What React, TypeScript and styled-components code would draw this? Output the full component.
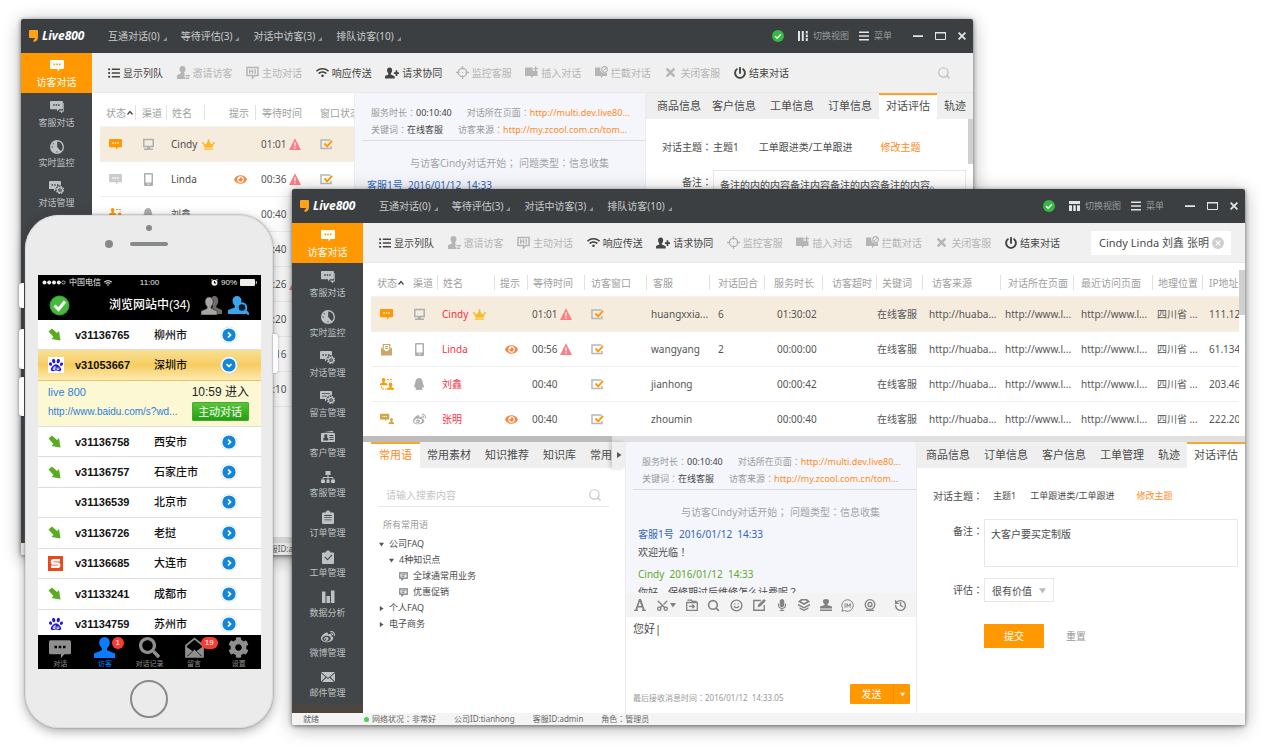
import React from "react";
import styled, { createGlobalStyle, css } from "styled-components";
import {
  FaListUl, FaWifi, FaTimes, FaPowerOff, FaQq, FaWeibo, FaCrown, FaEye,
  FaSearch, FaMicrophone, FaCog, FaPaw,
} from "react-icons/fa";
import { History, Scissors, Search, Smile } from "lucide-react";

const cjk = '"Noto Sans", "Noto Sans CJK SC", sans-serif';
const phoneFont = '"Liberation Sans", "Noto Sans CJK SC", sans-serif';
const orange = "#ff9801";

const Global = createGlobalStyle`
  *, *::before, *::after { box-sizing: border-box; }
  body { margin: 0; background: #fff; font-family: ${cjk}; font-size: 10px; line-height: 14px; color: #4c4c4c; }
  button, input, textarea, select { font: inherit; color: inherit; margin: 0; padding: 0; border: 0; background: none; outline: 0; border-radius: 0; }
  button { cursor: pointer; white-space: nowrap; }
  svg { display: block; flex: none; }
  ul { list-style: none; margin: 0; padding: 0; }
  a { color: inherit; text-decoration: none; }
`;

/* ---------- icons ---------- */

type GlyphProps = { w?: number; h?: number; box?: string; children: React.ReactNode };
const Glyph = ({ w = 14, h = 14, box, children }: GlyphProps) => (
  <svg width={w} height={h} viewBox={box ?? `0 0 ${w} ${h}`} fill="currentColor" aria-hidden="true">{children}</svg>
);

const bubble =
  "M1 1h12a1 1 0 0 1 1 1v7a1 1 0 0 1-1 1h-3.200L7.600 12.600V10H1a1 1 0 0 1-1-1V2a1 1 0 0 1 1-1zM3.500 4.600v1.600h1.600V4.600zM6.200 4.600v1.600h1.600V4.600zM8.900 4.600v1.600h1.600V4.600z";
const person = "M6 0a3 3 0 0 1 3 3c0 1.600-.7 2.600-1.500 3.400v1.200L12 9.400V12H0V9.400l4.500-1.800V6.400C3.700 5.600 3 4.600 3 3a3 3 0 0 1 3-3z";

const ChatIcon = ({ w = 13 }: { w?: number }) => <Glyph w={w} h={w} box="0 0 14 14"><path fillRule="evenodd" d={bubble} /></Glyph>;
const ChatsIcon = () => (
  <Glyph><path fillRule="evenodd" transform="scale(.92)" d={bubble} /><path d="M13.300 3h.7v8.500h-1.800v2l-2.200-2H8.800l.8-1h3.700z" /></Glyph>
);
const ClockIcon = () => (
  <Glyph><path fillRule="evenodd" d="M7 0a7 7 0 1 1 0 14A7 7 0 0 1 7 0zm.2 1.600V7l3.500 4.100A5.400 5.400 0 0 0 7.200 1.600zM1.500 6.500v1h1.500v-1zM6.500 11.200v1.400h1v-1.400zM3.200 3l-.6.7.9.9.6-.7z" /></Glyph>
);
const ChatGearIcon = ({ lines }: { lines?: boolean }) => (
  <Glyph w={15}>
    {lines
      ? <path fillRule="evenodd" d="M1 1h10a1 1 0 0 1 1 1v3.500A4.300 4.300 0 0 0 6.500 10L5 11.500V9H0V2a1 1 0 0 1 1-1zM2 3.200v.9h8v-.9zM2 5.700v.9h5v-.9z" />
      : <path fillRule="evenodd" d="M1 1h10a1 1 0 0 1 1 1v3.500A4.300 4.300 0 0 0 6.500 10L5 11.500V9H0V2a1 1 0 0 1 1-1zM2.500 4.200v1.500H4V4.200zM5.200 4.200v1.500h1.500V4.200zM8 4.200v1.500h1.500V4.200z" />}
    <circle cx="11" cy="10" r="2.500" fill="none" stroke="currentColor" strokeWidth="1.300" />
    <circle cx="11" cy="10" r="3.700" fill="none" stroke="currentColor" strokeWidth="1.100" strokeDasharray="1.450 1.450" />
    <circle cx="11" cy="10" r=".7" />
  </Glyph>
);
const CardIcon = () => (
  <Glyph><path d="M2 2.200 12 .8l.4 1.400z" /><path fillRule="evenodd" d="M1 3h12a1 1 0 0 1 1 1v7a1 1 0 0 1-1 1H1a1 1 0 0 1-1-1V4a1 1 0 0 1 1-1zm3.800 1.200a1.700 1.700 0 0 0-1 3l-1.500 1v2.300h5V8.200l-1.500-1a1.700 1.700 0 0 0-1-3zM8.500 5v1h4V5zm0 2v1h4V7zm0 2v1h4V9z" /></Glyph>
);
const OrgIcon = () => (
  <Glyph><path d="M4.500 1h5v4h-5zM0 9.500h4V13H0zM10 9.500h4V13h-4zM5.500 9.500h3V13h-3z" /><path d="M7 5v4.500M2 9.500v-2h10v2" fill="none" stroke="currentColor" /></Glyph>
);
const ClipIcon = ({ check }: { check?: boolean }) => (
  <Glyph>
    <path fillRule="evenodd" d={check
      ? "M2 2.500h2.500L6 .6h2l1.500 1.900H12a1 1 0 0 1 1 1V13a1 1 0 0 1-1 1H2a1 1 0 0 1-1-1V3.500a1 1 0 0 1 1-1zM3.500 7.200l3 3.400 5-5.400-.8-.7-4.200 4.500-2.200-2.500z"
      : "M2 2.500h2.500L6 .6h2l1.500 1.900H12a1 1 0 0 1 1 1V13a1 1 0 0 1-1 1H2a1 1 0 0 1-1-1V3.500a1 1 0 0 1 1-1zM3.200 5v.9h7.600V5zm0 2.200v.9h7.600v-.9zm0 2.200v.9h7.600v-.9z"} />
  </Glyph>
);
const BarsIcon = () => <Glyph><path d="M1 1.500h3.500V13H1zM5.500 6H9v7H5.500zM10 .500h3.500V13H10z" /></Glyph>;
const MailIcon = () => (
  <Glyph><path d="M0 2h14L7 8zM0 3.200 4.600 7 0 11.600zM14 3.200 9.400 7l4.600 4.600zM5.400 7.700 7 9l1.600-1.300 4.600 4.300H.8z" /></Glyph>
);
const InviteIcon = () => (
  <Glyph w={13} h={13}><path d="M5.500 0a3 3 0 0 1 3 3c0 1.500-.6 2.500-1.400 3.300v1l2 .9H7.500v3.300H8V13H0V9.600l3.900-2.300v-1C3.100 5.500 2.500 4.500 2.500 3a3 3 0 0 1 3-3zM8.500 9h4.500v1.300H8.500zM11 8.500l2 1.200-2 1.300zM8.500 11.500H12V13H8.500z" /></Glyph>
);
const UserPlusIcon = () => (
  <Glyph w={14} h={12}><path d={person} transform="translate(-.5 .5) scale(.85 .92)" /><path d="M10.600 3.200h1.700v2H14v1.700h-1.700v2h-1.700v-2H8.900V5.200h1.700z" /></Glyph>
);
const HiIcon = () => (
  <Glyph w={13} h={13}><path fill="none" stroke="currentColor" strokeWidth="1.500" d="M1 1.500h11v8H8.500l-2 2.500V9.500H1z" /><path d="M3 3.200h1.300v1.600h1.600V3.200h1.300v4.600H5.900V6H4.300v1.800H3zM8.500 3.200h1.500v4.600H8.500z" /></Glyph>
);
const TargetIcon = () => (
  <Glyph w={13} h={13}><circle cx="6.500" cy="6.500" r="4.200" fill="none" stroke="currentColor" strokeWidth="1.300" /><path d="M5.800 0h1.400v3.500H5.800zM5.800 9.500h1.400V13H5.800zM0 5.800h3.500v1.400H0zM9.500 5.800H13v1.400H9.500zM6 6h1v1H6z" /></Glyph>
);
const InsertIcon = () => (
  <Glyph w={13} h={13}><path d="M0 1.500h7.500v3.300h5V10H8.200L6 12.300V10H0z" /><path d="M10 .200h1.200V2H13v1.200h-1.800V5H10V3.200H8.300V2H10z" /></Glyph>
);
const BlockIcon = () => (
  <Glyph w={13} h={13}><path d="M0 1.500h5.500a4.300 4.300 0 0 0 6.500 5V10H8L6 12.300V10H0z" /><circle cx="9.500" cy="3.500" r="2.800" fill="none" stroke="currentColor" strokeWidth="1.200" /><path d="m7.700 5.500 3.800-4" stroke="currentColor" /></Glyph>
);
const MonitorIcon = () => (
  <Glyph w={13} h={13}><path fill="none" stroke="currentColor" strokeWidth="1.500" d="M1.800 1.500h9.400v7H1.800z" /><path d="M5 9h3v1.500H5zM2 10.500h9V12H2z" /></Glyph>
);
const MobileIcon = () => (
  <Glyph w={13} h={13}><path fillRule="evenodd" d="M3 0h7a1 1 0 0 1 1 1v11a1 1 0 0 1-1 1H3a1 1 0 0 1-1-1V1a1 1 0 0 1 1-1zm.5 1.500v8h6v-8zM5.800 10.500v1.300h1.400v-1.300z" /></Glyph>
);
const WarnIcon = () => (
  <Glyph w={12} h={12}><path fill="#fa7f86" d="M6 .3 12 12H0z" /><path fill="#fff" d="M5.400 4.300h1.200v4H5.400zM5.400 9.300h1.200v1.200H5.400z" /></Glyph>
);
const WindowIcon = () => (
  <Glyph w={13} h={12}><path fill="none" stroke="#b4b8ba" strokeWidth="1.500" d="M10.500 2H1v8.500h10V8" /><path fill="none" stroke={orange} strokeWidth="1.900" d="m4.500 5.500 2.700 2.800L12 2.800" /></Glyph>
);
const LetterIcon = () => (
  <Glyph w={13} h={13}><path fill="none" stroke="#cfa669" strokeWidth="1.200" d="M3.200 6.500v-5h6.600v5M5 3.500h3M5 5.300h3" /><path fill="#cfa669" d="M1 4.500 6.500 8.500l5.500-4V12.500H1z" /></Glyph>
);
const TransferIcon = () => (
  <Glyph w={14} h={12}><path d={person} transform="scale(.6)" /><path d={person} transform="translate(7 4.600) scale(.6)" /><path fill="none" stroke="currentColor" strokeDasharray="2 1" d="M7 1.500h4.500v2M1.500 8.500v2.500h5" /></Glyph>
);
const AssistIcon = () => (
  <Glyph w={14} h={12}><path fillRule="evenodd" d={bubble} transform="scale(.66)" /><path d={person} transform="translate(8.500 5) scale(.5)" /></Glyph>
);
const CommentIcon = () => (
  <Glyph w={9} h={9}><path fill="none" stroke="#777" strokeWidth="1.200" d="M.8.900h7.400v5.300H4.500L3 7.800V6.200H.8z" /><path stroke="#777" d="M2.500 2.800h4M2.500 4.300h3" /></Glyph>
);
const OkBadge = ({ size = 12 }: { size?: number }) => (
  <Glyph w={size} h={size} box="0 0 12 12"><circle cx="6" cy="6" r="6" fill="#35b845" /><path fill="none" stroke="#fff" strokeWidth="1.300" d="m3.200 6.200 2 2 3.700-4" /></Glyph>
);
const ColumnsIcon = () => <Glyph w={10} h={10}><path d="M0 0h2v10H0zM3.800 0h2v10h-2zM7.800 0h2v2.600h-2zM7.800 3.600h2v2.600h-2zM7.800 7.200h2V10h-2z" /></Glyph>;
const RowsIcon = () => <Glyph w={11} h={10}><path d="M0 0h11v3H0zM0 4.200h3V10H0zM4.200 4.200h2.600V10H4.200zM8 4.200h3V10H8z" /></Glyph>;
const MenuIcon = () => <Glyph w={10} h={10}><path d="M0 .5h10V2H0zM0 4.200h10v1.500H0zM0 8h10v1.500H0z" /></Glyph>;
const Corner = () => <Glyph w={4} h={4}><path fill="#8e9192" d="M4 0v4H0z" /></Glyph>;
const Triangle = ({ dir, color = "#555", size = 5 }: { dir: "down" | "right"; color?: string; size?: number }) => (
  <Glyph w={size} h={size} box="0 0 6 6"><path fill={color} d={dir === "down" ? "M0 1h6L3 5.500z" : "M1 0l4.500 3L1 6z"} /></Glyph>
);

/* ---------- window frame ---------- */

const Desktop = styled.main`
  position: relative;
  min-width: 1200px;
  min-height: 100vh;
  overflow: hidden;
`;

const Frame = styled.section<{ $top: number; $left: number; $right: number }>`
  position: absolute;
  top: ${(p) => p.$top}px;
  left: ${(p) => p.$left}px;
  right: ${(p) => p.$right}px;
  border-radius: 2px;
  background: #fff;
  box-shadow: 0 1px 4px rgba(0, 0, 0, 0.5), 0 3px 18px rgba(0, 0, 0, 0.32);
`;
const Clip = styled.div`
  border-radius: 2px;
  overflow: hidden;
`;

const TitleBar = styled.header`
  display: flex;
  align-items: center;
  height: 34px;
  padding: 0 7px 0 8px;
  background: #3c3f41;
  color: #c9cbcc;
`;
const Logo = styled.a`
  display: flex;
  align-items: center;
  gap: 4px;
  width: 79px;
  color: #fff;
  font-size: 12px;
  font-weight: 700;
  font-style: italic;
`;
const Menus = styled.nav`
  display: flex;
  gap: 14px;
  flex: 1;
`;
const MenuButton = styled.button`
  display: flex;
  align-items: center;
  gap: 3px;
  svg { margin-top: 5px; }
`;
const TitleTools = styled.div`
  display: flex;
  align-items: center;
  font-size: 9px;
  color: #9a9c9d;
`;
const TitleTool = styled.button<{ $after: number }>`
  display: flex;
  align-items: center;
  gap: 5px;
  margin-right: ${(p) => p.$after}px;
  svg { color: #e4e4e4; }
`;

const Body = styled.div`
  display: grid;
  grid-template-columns: 71px minmax(0, 1fr);
`;
const Sidebar = styled.nav`
  padding-bottom: 2px;
  background: #424649;
  border-bottom: 8px solid #4c4540;
`;
const SideItem = styled.a<{ $active?: boolean }>`
  display: flex;
  flex-direction: column;
  align-items: center;
  gap: 2px;
  height: 40px;
  padding-top: 7px;
  font-size: 9px;
  color: #bfc1c2;
  ${(p) => p.$active && css`
    padding-top: 6px;
    background: ${orange};
    color: #fff;
    font-size: 10px;
  `}
`;
const Main = styled.div`
  display: flex;
  flex-direction: column;
`;
const Toolbar = styled.div`
  display: flex;
  align-items: center;
  justify-content: space-between;
  height: 40px;
  padding: 0 14px 0 16px;
  background: #f0f0f0;
  border-bottom: 1px solid #e8e8e8;
`;
const Tools = styled.div`
  display: flex;
  justify-content: space-between;
  width: 681px;
`;
const Tool = styled.button<{ $off?: boolean }>`
  display: flex;
  align-items: center;
  gap: 3px;
  color: ${(p) => (p.$off ? "#b5b5b5" : "#444")};
`;
const SearchBox = styled.label`
  display: flex;
  align-items: center;
  width: 140px;
  height: 24px;
  padding: 0 7px 0 8px;
  background: #fff;
  font-size: 11px;
  input { flex: 1; min-width: 0; }
`;
const IconButton = styled.button<{ $color?: string }>`
  display: flex;
  align-items: center;
  color: ${(p) => p.$color ?? "#bbb"};
`;
const SearchIconButton = styled(IconButton)`
  margin-right: 8px;
`;
const StatusBar = styled.footer`
  display: flex;
  align-items: center;
  gap: 18px;
  height: 12px;
  padding-left: 11px;
  background: #f4f4f4;
  font-size: 8px;
  line-height: 12px;
  color: #666;
`;
const StatusReady = styled.span`
  width: 43px;
`;
const StatusNet = styled.div`
  display: flex;
  align-items: center;
  gap: 3px;
  &::before { content: ""; width: 5px; height: 5px; border-radius: 50%; background: #4ccf50; }
`;
const Mark = styled.span`
  font-family: "Noto Sans CJK TC", sans-serif;
`;

const menus = ["互通对话(0)", "等待评估(3)", "对话中访客(3)", "排队访客(10)"];
const sideItems: [string, React.ReactNode][] = [
  ["访客对话", <ChatIcon w={14} />],
  ["客服对话", <ChatsIcon />],
  ["实时监控", <ClockIcon />],
  ["对话管理", <ChatGearIcon />],
  ["留言管理", <ChatGearIcon lines />],
  ["客户管理", <CardIcon />],
  ["客服管理", <OrgIcon />],
  ["订单管理", <ClipIcon />],
  ["工单管理", <ClipIcon check />],
  ["数据分析", <BarsIcon />],
  ["微博管理", <FaWeibo size={14} />],
  ["邮件管理", <MailIcon />],
];
const tools: [string, React.ReactNode, boolean][] = [
  ["显示列队", <FaListUl size={12} />, false],
  ["邀请访客", <InviteIcon />, true],
  ["主动对话", <HiIcon />, true],
  ["响应传送", <FaWifi size={13} />, false],
  ["请求协同", <UserPlusIcon />, false],
  ["监控客服", <TargetIcon />, true],
  ["插入对话", <InsertIcon />, true],
  ["拦截对话", <BlockIcon />, true],
  ["关闭客服", <FaTimes size={13} />, true],
  ["结束对话", <FaPowerOff size={12} />, false],
];

type WindowProps = {
  top: number; left: number; right: number;
  viewIcon: React.ReactNode; search: React.ReactNode; children: React.ReactNode;
};
const AppWindow = ({ top, left, right, viewIcon, search, children }: WindowProps) => (
  <Frame $top={top} $left={left} $right={right}>
    <Clip>
      <TitleBar>
        <Logo href="#">
          <Glyph w={9} h={12}><path fill="#ffa21a" d="M1 0h7a1 1 0 0 1 1 1v6c0 3-1.500 4.500-4.500 5V9.800C5.600 9.400 6 8.800 6 8H1a1 1 0 0 1-1-1V1a1 1 0 0 1 1-1z" /></Glyph>
          Live800
        </Logo>
        <Menus>{menus.map((m) => <MenuButton key={m}>{m}<Corner /></MenuButton>)}</Menus>
        <TitleTools>
          <TitleTool $after={14} aria-label="在线"><OkBadge /></TitleTool>
          <TitleTool $after={10}>{viewIcon}切换视图</TitleTool>
          <TitleTool $after={21}><MenuIcon />菜单</TitleTool>
          <TitleTool $after={12} aria-label="最小化"><Glyph w={10} h={10}><path d="M0 4.300h10v1.600H0z" /></Glyph></TitleTool>
          <TitleTool $after={12} aria-label="最大化"><Glyph w={11} h={8}><path fill="none" stroke="currentColor" d="M.5.500h10v7H.5z" /><path d="M0 0h11v1.500H0z" /></Glyph></TitleTool>
          <TitleTool $after={0} aria-label="关闭"><Glyph w={8} h={8}><path fill="none" stroke="currentColor" strokeWidth="1.800" d="m.6.600 6.800 6.800M7.400.600.6 7.400" /></Glyph></TitleTool>
        </TitleTools>
      </TitleBar>
      <Body>
        <Sidebar>
          {sideItems.map(([label, icon], i) => <SideItem href="#" key={label} $active={i === 0}>{icon}{label}</SideItem>)}
        </Sidebar>
        <Main>
          <Toolbar>
            <Tools>{tools.map(([label, icon, off]) => <Tool key={label} $off={off}>{icon}{label}</Tool>)}</Tools>
            {search}
          </Toolbar>
          {children}
        </Main>
      </Body>
      <StatusBar>
        <StatusReady>就绪</StatusReady>
        <StatusNet><span>网络状况<Mark>：</Mark>非常好</span></StatusNet>
        <span>公司ID:tianhong</span>
        <span>客服ID:admin</span>
        <span>角色<Mark>：</Mark>管理员</span>
      </StatusBar>
    </Clip>
  </Frame>
);

/* ---------- visitor table ---------- */

const VisitorTable = styled.table`
  width: 100%;
  table-layout: fixed;
  border-collapse: separate;
  border-spacing: 0;
  white-space: nowrap;
`;
const HeadCell = styled.th`
  height: 34px;
  padding: 6px 0 0;
  font-weight: 400;
  text-align: left;
  color: #a0a0a0;
  border-bottom: 1px solid #f3f1ee;
`;
const HeadText = styled.div<{ $pad: number; $rule?: boolean }>`
  display: flex;
  align-items: center;
  gap: 1px;
  height: 15px;
  padding-left: ${(p) => p.$pad}px;
  border-left: ${(p) => (p.$rule ? "1px solid #e2e2e2" : "0")};
`;
const VisitorRow = styled.tr<{ $active?: boolean }>`
  background: ${(p) => (p.$active ? "#f6ecde" : "transparent")};
`;
const Cell = styled.td<{ $pad: number; $color?: string }>`
  height: 35px;
  padding: 0 0 0 ${(p) => p.$pad}px;
  border-bottom: 1px solid #f0f0f0;
  color: ${(p) => p.$color ?? "#555"};
`;
const CellLine = styled.div<{ $gap?: number }>`
  display: flex;
  align-items: center;
  gap: ${(p) => p.$gap ?? 2}px;
`;
const Tint = styled.span<{ $color: string }>`
  display: inline-flex;
  color: ${(p) => p.$color};
`;

const statusIcon = (kind: string) => {
  switch (kind) {
    case "chat": return <Tint $color={orange}><ChatIcon /></Tint>;
    case "idle": return <Tint $color="#ccc"><ChatIcon /></Tint>;
    case "letter": return <LetterIcon />;
    case "transfer": return <Tint $color={orange}><TransferIcon /></Tint>;
    default: return <Tint $color="#d5a545"><AssistIcon /></Tint>;
  }
};
const channelIcon = (kind: string) => (
  <Tint $color="#abafb1">
    {kind === "pc" ? <MonitorIcon /> : kind === "mobile" ? <MobileIcon /> : kind === "qq" ? <FaQq size={12} /> : <FaWeibo size={13} />}
  </Tint>
);

type Visitor = {
  status: string; channel: string; name?: string; vip?: boolean; seen?: boolean; wait: string; warn?: boolean; extra?: string[];
};
type Column = { label: string; w?: number; head: number; body: number; rule?: boolean };

const VisitorGrid = ({ columns, rows, nameColor }: { columns: Column[]; rows: Visitor[]; nameColor: string }) => (
  <VisitorTable>
    <colgroup>{columns.map((c) => <col key={c.label} width={c.w} />)}</colgroup>
    <thead>
      <tr>
        {columns.map((c, i) => (
          <HeadCell key={c.label}>
            <HeadText $pad={c.head} $rule={c.rule}>
              {c.label}
              {i === 0 && <Glyph w={6} h={6}><path fill="none" stroke="#444" strokeWidth="1.200" d="m.5 4.500 2.500-3 2.500 3" /></Glyph>}
            </HeadText>
          </HeadCell>
        ))}
      </tr>
    </thead>
    <tbody>
      {rows.map((r, i) => (
        <VisitorRow key={i} $active={i === 0}>
          <Cell $pad={columns[0].body}><CellLine>{statusIcon(r.status)}</CellLine></Cell>
          <Cell $pad={columns[1].body}><CellLine>{channelIcon(r.channel)}</CellLine></Cell>
          <Cell $pad={columns[2].body} $color={nameColor}>
            <CellLine $gap={5}>{r.name}{r.vip && <Tint $color="#fbb92a"><FaCrown size={13} /></Tint>}</CellLine>
          </Cell>
          <Cell $pad={columns[3].body}><CellLine>{r.seen && <Tint $color="#f58742"><FaEye size={13} /></Tint>}</CellLine></Cell>
          <Cell $pad={columns[4].body}><CellLine>{r.wait}{r.warn && <WarnIcon />}</CellLine></Cell>
          <Cell $pad={columns[5].body}><CellLine><WindowIcon /></CellLine></Cell>
          {r.extra?.map((t, n) => <Cell key={n} $pad={columns[6 + n].body}>{t}</Cell>)}
        </VisitorRow>
      ))}
    </tbody>
  </VisitorTable>
);

const wideColumns: Column[] = [
  { label: "状态", w: 36, head: 6, body: 9 },
  { label: "渠道", w: 30, head: 6, body: 6 },
  { label: "姓名", w: 57, head: 5, body: 5, rule: true },
  { label: "提示", w: 33, head: 5, body: 11, rule: true },
  { label: "等待时间", w: 57, head: 5, body: 5, rule: true },
  { label: "访客窗口", w: 62, head: 6, body: 7, rule: true },
  { label: "客服", w: 63, head: 6, body: 5, rule: true },
  { label: "对话回合", w: 55, head: 8, body: 9, rule: true },
  { label: "服务时长", w: 58, head: 9, body: 13, rule: true },
  { label: "访客超时", w: 54, head: 9, body: 9, rule: true },
  { label: "关键词", w: 46, head: 5, body: 1, rule: true },
  { label: "访客来源", w: 78, head: 9, body: 7, rule: true },
  { label: "对话所在页面", w: 73, head: 7, body: 5, rule: true },
  { label: "最近访问页面", w: 79, head: 7, body: 8, rule: true },
  { label: "地理位置", w: 50, head: 5, body: 5, rule: true },
  { label: "IP地址", head: 6, body: 7, rule: true },
];
const more = (agent: string, turns: string, time: string, ip: string) => [
  agent, turns, time, "", "在线客服", "http://huaba...", "http://www.l...", "http://www.l...", "四川省 ...", ip,
];
const wideRows: Visitor[] = [
  { status: "chat", channel: "pc", name: "Cindy", vip: true, wait: "01:01", warn: true, extra: more("huangxxia...", "6", "01:30:02", "111.12") },
  { status: "letter", channel: "mobile", name: "Linda", seen: true, wait: "00:56", warn: true, extra: more("wangyang", "2", "00:00:00", "61.134") },
  { status: "transfer", channel: "qq", name: "刘鑫", wait: "00:40", extra: more("jianhong", "", "00:00:42", "203.46") },
  { status: "assist", channel: "weibo", name: "张明", seen: true, wait: "00:40", extra: more("zhoumin", "", "00:00:40", "222.20") },
];
const narrowColumns: Column[] = [
  { label: "状态", w: 35, head: 6, body: 9 },
  { label: "渠道", w: 31, head: 6, body: 7, rule: true },
  { label: "姓名", w: 38, head: 5, body: 5, rule: true },
  { label: "提示", w: 51, head: 24, body: 30, rule: true },
  { label: "等待时间", w: 59, head: 6, body: 6, rule: true },
  { label: "窗口状态", head: 6, body: 6 },
];
const narrowRows: Visitor[] = [
  { status: "chat", channel: "pc", name: "Cindy", vip: true, wait: "01:01", warn: true },
  { status: "idle", channel: "mobile", name: "Linda", seen: true, wait: "00:36", warn: true },
  { status: "transfer", channel: "qq", name: "刘鑫", wait: "00:40" },
  { status: "idle", channel: "pc", wait: "00:40" },
  { status: "idle", channel: "pc", wait: "00:26", warn: true },
  { status: "idle", channel: "mobile", wait: "00:20" },
  { status: "idle", channel: "qq", wait: "00:16" },
  { status: "idle", channel: "pc", wait: "00:10" },
];

const ListPane = styled.div`
  display: flex;
  flex-direction: column;
  justify-content: space-between;
  padding-left: 8px;
  overflow: hidden;
`;
const TablePane = styled.div`
  display: grid;
  grid-template-columns: minmax(0, 1fr) 6px;
  height: 173px;
  padding-left: 8px;
  overflow: hidden;
`;
const TableClip = styled.div`
  overflow: hidden;
`;
const VThumb = styled.div<{ $gap?: number }>`
  height: 45px;
  margin-top: ${(p) => p.$gap ?? 0}px;
  background: #d0d0d0;
`;
const HScroll = styled.div`
  height: 6px;
  background: #e0e0e0;
`;
const HThumb = styled.div`
  width: 249px;
  height: 6px;
  background: #bcbcbc;
`;
const Panes = styled.div`
  display: grid;
  grid-template-columns: 262px 292px minmax(0, 1fr);
  flex: 1;
`;

/* ---------- tabs ---------- */

const TabBar = styled.div<{ $start?: number }>`
  display: flex;
  height: 26px;
  padding-left: ${(p) => p.$start ?? 0}px;
  background: #efefef;
  overflow: hidden;
`;
const Tab = styled.button<{ $active?: boolean; $accent?: boolean; $tight?: boolean }>`
  flex: none;
  height: 26px;
  padding: 0 ${(p) => (p.$tight ? 4 : p.$accent ? 8 : 7)}px;
  font-size: 11px;
  color: ${(p) => (p.$accent ? "#ff8a1c" : "#4c4c4c")};
  ${(p) => p.$active && css`
    background: #fff;
    box-shadow: inset 0 2px 0 #ffa42a;
  `}
`;

/* ---------- conversation ---------- */

const Conversation = styled.div`
  display: flex;
  flex-direction: column;
  border-left: 1px solid #ececef;
  border-right: 1px solid #ececef;
`;
const Log = styled.div`
  height: 151px;
  padding: 11px 0 0 7px;
  background: #f5f6fb;
  overflow: hidden;
  white-space: nowrap;
`;
const Facts = styled.div`
  padding: 0 0 2px 9px;
  border-bottom: 1px solid #dadce2;
  font-size: 9px;
  line-height: 17px;
  color: #999;
`;
const Fact = styled.span`
  margin-right: 15px;
  b { font-weight: 400; color: #444; }
  a { color: #ff8a1c; }
`;
const Notice = styled.p`
  margin: 15px 0 7px 12px;
  text-align: center;
  color: #a3a3a3;
`;
const Message = styled.div<{ $color: string }>`
  padding-left: 5px;
  margin-bottom: 6px;
  line-height: 16px;
  color: ${(p) => p.$color};
  white-space: pre;
  p { margin: 2px 0 0; color: #4c4c4c; }
`;

const ChatLog = () => (
  <Log>
    <Facts>
      <div>
        <Fact>服务时长<Mark>：</Mark><b>00:10:40</b></Fact>
        <Fact>对话所在页面<Mark>：</Mark><a href="#">http://multi.dev.live80...</a></Fact>
      </div>
      <div>
        <Fact>关键词<Mark>：</Mark><b>在线客服</b></Fact>
        <Fact>访客来源<Mark>：</Mark><a href="#">http://my.zcool.com.cn/tom...</a></Fact>
      </div>
    </Facts>
    <Notice>与访客Cindy对话开始<Mark>；</Mark> 问题类型<Mark>：</Mark>信息收集</Notice>
    <Message $color="#2f66bd">{"客服1号  2016/01/12  14:33"}<p>欢迎光临<Mark>！</Mark></p></Message>
    <Message $color="#62a82b">{"Cindy  2016/01/12  14:33"}<p>你好，保修期过后维修怎么计费呢<Mark>？</Mark></p></Message>
  </Log>
);

const EditorBar = styled.div`
  display: flex;
  align-items: center;
  justify-content: space-between;
  height: 24px;
  padding: 0 9px 0 8px;
  background: #f3f3f4;
`;
const EditorTool = styled.button`
  display: flex;
  align-items: center;
  gap: 1px;
  color: #828282;
  &:last-child { margin-left: 8px; }
`;
const ScissorsUp = styled(Scissors)`
  transform: rotate(-90deg);
`;
const Draft = styled.textarea`
  flex: 1;
  padding: 4px 7px;
  font-size: 11px;
  line-height: 16px;
  resize: none;
  background: #fff;
`;
const SendRow = styled.div`
  display: flex;
  align-items: center;
  justify-content: space-between;
  padding: 0 6px 8px 7px;
  font-size: 8px;
  color: #999;
  white-space: pre;
`;
const SendTime = styled.span`
  padding-top: 8px;
`;
const SendGroup = styled.div`
  display: flex;
  height: 20px;
  border-radius: 1px;
  background: ${orange};
  color: #fff;
  font-size: 10px;
`;
const Send = styled.button`
  width: 43px;
`;
const SendMore = styled.button`
  display: flex;
  align-items: center;
  justify-content: center;
  width: 17px;
  border-left: 1px solid #f28c00;
`;

const Editor = () => (
  <>
    <EditorBar>
      <EditorTool aria-label="字体"><Glyph w={12} h={12}><path fillRule="evenodd" d="M5 0h2l3.700 10.800H12V12H8v-1.200h.8L8 8.400H4l-.8 2.400H4V12H0v-1.200h1.300zm.8 2.800L4.400 7.100h2.900z" /></Glyph></EditorTool>
      <EditorTool aria-label="截图"><ScissorsUp size={13} strokeWidth={2.500} /><Triangle dir="down" color="#828282" size={6} /></EditorTool>
      <EditorTool aria-label="文件"><Glyph w={12} h={12}><path fill="none" stroke="currentColor" strokeWidth="1.300" d="M.7 3.500h10.600v7.800H.7zM1.500 1.200h4l1 1.300h4M3 7.400h5M6.300 5.500l2 1.900-2 1.900" /></Glyph></EditorTool>
      <EditorTool aria-label="查找"><Search size={13} strokeWidth={3} /></EditorTool>
      <EditorTool aria-label="表情"><Smile size={13} strokeWidth={2.500} /></EditorTool>
      <EditorTool aria-label="评价"><Glyph w={13} h={12}><path fill="none" stroke="currentColor" strokeWidth="1.400" d="M8 1.500H.8v9.700h10.400V6" /><path d="M11 0l2 1.800L7.300 7.500 4.500 8.300 5.300 5.600z" /></Glyph></EditorTool>
      <EditorTool aria-label="语音"><FaMicrophone size={12} /></EditorTool>
      <EditorTool aria-label="知识库"><Glyph w={12} h={12}><path fillRule="evenodd" d="M3 0h6l3 2.800L6 6 0 2.800zM4 1.500 3 2.600l3 1.400 3-1.400-1-1.100zM0 4.800 6 8l6-3.200v1.600L6 9.600 0 6.400zM1.500 8.300 6 10.600l4.500-2.300v1.500L6 12 1.500 9.800z" /></Glyph></EditorTool>
      <EditorTool aria-label="访客"><Glyph w={12} h={12}><path d={person} transform="scale(1 .8)" /><path d="M0 10.500h12V12H0z" /></Glyph></EditorTool>
      <EditorTool aria-label="即时消息"><Glyph w={13} h={13}><path fill="none" stroke="currentColor" d="M6.500.700a5.800 5.800 0 1 1-3 10.800L1 12.300l.7-2.600A5.800 5.800 0 0 1 6.500.700z" /><path fill="none" stroke="currentColor" d="M4 4.300v4.400M6 8.700V4.600l1.600 2.600 1.600-2.600v4.100" /></Glyph></EditorTool>
      <EditorTool aria-label="视频"><Glyph w={12} h={12}><circle cx="6" cy="5.500" r="4.800" fill="none" stroke="currentColor" strokeWidth="1.300" /><circle cx="6" cy="5.500" r="2" fill="none" stroke="currentColor" strokeWidth="1.300" /><path d="M2 10.700h8V12H2z" /></Glyph></EditorTool>
      <EditorTool aria-label="历史"><History size={13} strokeWidth={2.500} /></EditorTool>
    </EditorBar>
    <Draft aria-label="消息" defaultValue="您好|" />
    <SendRow>
      <SendTime>最后接收消息时间<Mark>：</Mark>{"2016/01/12  14:33.05"}</SendTime>
      <SendGroup>
        <Send>发送</Send>
        <SendMore aria-label="发送选项"><Triangle dir="down" color="#fff" /></SendMore>
      </SendGroup>
    </SendRow>
  </>
);

/* ---------- review form ---------- */

const Review = styled.form`
  display: grid;
  grid-template-columns: 50px minmax(0, 1fr);
  column-gap: 1px;
  row-gap: 11px;
  padding: 16px 7px 0 16px;
  line-height: 24px;
  > label, > span:first-child { text-align: right; white-space: nowrap; }
`;
const Subject = styled.div<{ $size: number; $start: number; $gap: number }>`
  display: flex;
  gap: ${(p) => p.$gap}px;
  padding-left: ${(p) => p.$start}px;
  font-size: ${(p) => p.$size}px;
  white-space: nowrap;
  a { margin-left: 8px; color: #ff8a1c; }
`;
const Remark = styled.textarea`
  height: 48px;
  padding: 6px;
  border: 1px solid #e8e8e8;
  line-height: 16px;
  resize: none;
`;
const Picker = styled.div`
  position: relative;
  width: 70px;
  select {
    width: 70px;
    height: 24px;
    padding-left: 7px;
    border: 1px solid #e8e8e8;
    appearance: none;
  }
  svg { position: absolute; right: 8px; top: 9px; pointer-events: none; }
`;
const Actions = styled.div`
  grid-column: 2;
  display: flex;
  gap: 22px;
  margin-top: 10px;
`;
const Submit = styled.button`
  width: 60px;
  height: 24px;
  background: ${orange};
  color: #fff;
`;
const Reset = styled.button`
  color: #999;
`;
const ReviewPane = styled.div`
  display: flex;
  flex-direction: column;
`;
const ScrollRow = styled.div`
  display: grid;
  grid-template-columns: minmax(0, 1fr) 5px;
  form { padding-right: 2px; }
`;

const ReviewForm = ({ id, size, start, gap, remark }: { id: string; size: number; start: number; gap: number; remark: string }) => (
  <Review onSubmit={(e) => e.preventDefault()}>
    <span>对话主题<Mark>：</Mark></span>
    <Subject $size={size} $start={start} $gap={gap}>
      <span>主题1</span><span>工单跟进类/工单跟进</span><a href="#">修改主题</a>
    </Subject>
    <label htmlFor={`${id}-remark`}>备注<Mark>：</Mark></label>
    <Remark id={`${id}-remark`} defaultValue={remark} />
    <label htmlFor={`${id}-rate`}>评估<Mark>：</Mark></label>
    <Picker>
      <select id={`${id}-rate`} defaultValue="很有价值"><option>很有价值</option></select>
      <Triangle dir="down" color="#bbb" size={7} />
    </Picker>
    <Actions>
      <Submit type="submit">提交</Submit>
      <Reset type="reset">重置</Reset>
    </Actions>
  </Review>
);

/* ---------- phrases ---------- */

const Phrases = styled.div`
  padding-left: 8px;
`;
const PhraseTabs = styled.div`
  display: grid;
  grid-template-columns: minmax(0, 1fr) 13px;
`;
const NextTabs = styled.button`
  display: flex;
  align-items: center;
  justify-content: center;
  background: #efefef;
  box-shadow: -2px 0 4px rgba(0, 0, 0, 0.18);
`;
const PhraseSearch = styled.label`
  display: flex;
  align-items: center;
  justify-content: space-between;
  height: 24px;
  margin: 15px 16px 10px 7px;
  padding: 0 7px 0 8px;
  border-bottom: 1px solid #e6e6e6;
  color: #c4c4c4;
  input { flex: 1; }
  input::placeholder { color: #c4c4c4; opacity: 1; }
`;
const Tree = styled.ul`
  font-size: 9px;
  line-height: 16px;
`;
const TreeItem = styled.li<{ $depth: number }>`
  display: flex;
  align-items: center;
  gap: 5px;
  padding-left: ${(p) => 8 + p.$depth * 10}px;
  color: #4c4c4c;
`;
const TreeHead = styled.li`
  padding-left: 12px;
  margin-bottom: 3px;
  color: #999;
`;

/* ---------- phone ---------- */

const Phone = styled.section`
  position: absolute;
  top: 215px;
  left: 25px;
  width: 248px;
  height: 513px;
  padding: 60px 12px 0 13px;
  border-radius: 34px;
  background: #ebebeb;
  box-shadow: inset 0 0 0 1px #dcdcdc, 0 0 2px #777, 0 3px 12px rgba(0, 0, 0, 0.35);
  font-family: ${phoneFont};
`;
const SideKey = styled.span<{ $top: number; $h: number; $right?: boolean }>`
  position: absolute;
  top: ${(p) => p.$top}px;
  ${(p) => (p.$right ? "right: -5px" : "left: -6px")};
  width: 5px;
  height: ${(p) => p.$h}px;
  border-radius: ${(p) => (p.$right ? "0 3px 3px 0" : "3px 0 0 3px")};
  background: #fbfbfb;
  box-shadow: 0 0 2px rgba(0, 0, 0, 0.35);
`;
const Dot = styled.span<{ $x: number; $y: number; $w: number; $h: number }>`
  position: absolute;
  left: ${(p) => p.$x}px;
  top: ${(p) => p.$y}px;
  width: ${(p) => p.$w}px;
  height: ${(p) => p.$h}px;
  border-radius: 4px;
  background: #868a8a;
`;
const HomeKey = styled.button`
  position: absolute;
  left: 105px;
  bottom: 10px;
  width: 38px;
  height: 38px;
  border: 2px solid #868a8a;
  border-radius: 50%;
`;
const Screen = styled.div`
  display: flex;
  flex-direction: column;
  height: 394px;
  background: #fff;
  overflow: hidden;
`;
const PhoneStatus = styled.div`
  display: grid;
  grid-template-columns: 1fr auto 1fr;
  align-items: center;
  height: 15px;
  padding: 0 4px;
  background: #000;
  color: #eee;
  font-size: 8px;
`;
const StatusSide = styled.div<{ $end?: boolean }>`
  display: flex;
  align-items: center;
  gap: 3px;
  justify-content: ${(p) => (p.$end ? "flex-end" : "flex-start")};
`;
const PhoneTitle = styled.header`
  display: grid;
  grid-template-columns: 54px 1fr 21px 21px;
  column-gap: 6px;
  align-items: center;
  height: 30px;
  padding: 0 12px 0 11px;
  background: #000;
  color: #fff;
  h1 { margin: 0; font-size: 12px; font-weight: 500; white-space: nowrap; }
`;
const PhoneBody = styled.div`
  flex: 1;
  min-height: 0;
  overflow: hidden;
`;
const PhoneList = styled.ul`
  display: flex;
  flex-direction: column;
  height: 320px;
`;
const PhoneRow = styled.li<{ $active?: boolean }>`
  flex: 1;
  display: grid;
  grid-template-columns: 27px 79px 1fr 18px;
  align-items: center;
  padding: 0 23px 0 10px;
  border-bottom: 1px solid #dedede;
  color: #111;
  font-size: 11px;
  font-weight: 500;
  strong { font-weight: 700; }
  ${(p) => p.$active && css`
    background: linear-gradient(#f9df94, #f7cd62 50%, #fdeab0);
    border-color: #e5c46a;
  `}
`;
const PhoneDetail = styled.li`
  display: grid;
  grid-template-columns: minmax(0, 1fr) auto;
  align-items: center;
  height: 46px;
  padding: 2px 12px 3px 10px;
  border-bottom: 1px solid #dedede;
  background: #fdf8d4;
  color: #2a7fd8;
  font-size: 11px;
  time { color: #222; font-size: 12px; text-align: right; }
`;
const DetailUrl = styled.a`
  font-size: 10px;
`;
const Talk = styled.button`
  width: 57px;
  height: 19px;
  border-radius: 2px;
  background: linear-gradient(#5cc63c, #1f9e0e);
  box-shadow: inset 0 0 0 1px #49a834;
  color: #fff;
  font-size: 11px;
`;
const PhoneTabs = styled.nav`
  display: grid;
  grid-template-columns: repeat(5, 1fr);
  height: 34px;
  background: #000;
`;
const PhoneTab = styled.a<{ $active?: boolean }>`
  position: relative;
  display: flex;
  flex-direction: column;
  align-items: center;
  justify-content: space-between;
  padding: 2px 0 0;
  font-size: 7px;
  line-height: 10px;
  color: ${(p) => (p.$active ? "#0a7cff" : "#8f8f8f")};
`;
const Badge = styled.span`
  position: absolute;
  top: 2px;
  left: 29px;
  min-width: 12px;
  height: 12px;
  padding: 0 4px;
  border-radius: 6px;
  background: #fb3b30;
  color: #fff;
  font-size: 8px;
  line-height: 12px;
`;

const ArrowGlyph = () => (
  <Glyph w={13} h={13}><path fill="#59ab1f" d="M.5 3.500 4 .500l5 4.500 2-2 1.500 9.500L3.500 11l2-2z" /></Glyph>
);
const BaiduGlyph = () => (
  <Glyph w={16} h={16}><path fill="#fff" d="M0 0h16v16H0z" /><g color="#2319dc" transform="translate(1 1)"><FaPaw size={14} /></g><path fill="none" stroke="#fff" strokeWidth=".9" d="M7 9v3.500H5.300V10.800H7M9 10.500v2h1.800v-2" /></Glyph>
);
const SogouGlyph = () => (
  <Glyph w={15} h={15}><path fill="#e8491c" d="M0 0h15v15H0z" /><path fill="none" stroke="#fff" strokeWidth="2.600" d="M12 4.300H5.500C3.500 4.300 3.500 7.500 5.500 7.500h4c2.200 0 2.200 3.300 0 3.300H3" /></Glyph>
);
const GoGlyph = ({ open }: { open?: boolean }) => (
  <Glyph w={18} h={18}><circle cx="9" cy="9" r="8.500" fill="#dfe3e6" /><circle cx="9" cy="9" r="7.800" fill="#fff" /><circle cx="9" cy="9" r="6.600" fill="#1186dc" /><path fill="none" stroke="#fff" strokeWidth="1.700" d={open ? "m6.500 8 2.500 2.500L11.500 8" : "m8 6.500 2.500 2.500L8 11.500"} /></Glyph>
);

const phoneRows: [string, string, string][] = [
  ["arrow", "v31136765", "柳州市"],
  ["baidu", "v31053667", "深圳市"],
  ["arrow", "v31136758", "西安市"],
  ["arrow", "v31136757", "石家庄市"],
  ["", "v31136539", "北京市"],
  ["arrow", "v31136726", "老挝"],
  ["sogou", "v31136685", "大连市"],
  ["arrow", "v31133241", "成都市"],
  ["baidu", "v31134759", "苏州市"],
];

const PhoneApp = () => (
  <Phone>
    <SideKey $top={68} $h={25} />
    <SideKey $top={114} $h={40} />
    <SideKey $top={162} $h={39} />
    <SideKey $top={119} $h={39} $right />
    <Dot $x={121} $y={10} $w={6} $h={6} />
    <Dot $x={80} $y={25} $w={8} $h={8} />
    <Dot $x={105} $y={27} $w={38} $h={4} />
    <Screen>
      <PhoneStatus>
        <StatusSide>
          <Glyph w={24} h={5}>{[2.5, 7.2, 12, 16.8].map((x) => <circle key={x} cx={x} cy="2.500" r="2" />)}<circle cx="21.500" cy="2.500" r="1.600" fill="none" stroke="currentColor" strokeWidth=".7" /></Glyph>
          中国电信<FaWifi size={8} />
        </StatusSide>
        <span>11:00</span>
        <StatusSide $end>
          <Glyph w={7} h={7}><circle cx="3.500" cy="3.800" r="3" /><path d="M3.500 2v2h1.500" stroke="#000" fill="none" /><path d="M0 1.500 1.500 0M5.500 0 7 1.500" stroke="currentColor" /></Glyph>
          90%
          <Glyph w={17} h={7}><rect width="15" height="7" rx="1" /><path d="M15.800 2.300h1v2.400h-1z" /></Glyph>
        </StatusSide>
      </PhoneStatus>
      <PhoneTitle>
        <Glyph w={21} h={21}><circle cx="10.500" cy="10.500" r="10" fill="#2c9e2c" /><circle cx="10.500" cy="10.500" r="9" fill="#48b93d" /><path fill="none" stroke="#fff" strokeWidth="3" d="m5.500 10.500 4 4 6.500-8" /></Glyph>
        <h1>浏览网站中(34)</h1>
        <Glyph w={21} h={19}><path fill="#6d6a69" transform="translate(6 0) scale(1.250 1.500)" d={person} /><path fill="#a9a5a3" stroke="#222" strokeWidth=".4" transform="translate(0 1) scale(1.350 1.500)" d={person} /></Glyph>
        <Glyph w={21} h={19}><path fill="#3aa5ea" transform="scale(1.500)" d={person} /><circle cx="14" cy="11.500" r="4.300" fill="#0a1a28" stroke="#3aa5ea" strokeWidth="2" /><path stroke="#3aa5ea" strokeWidth="2.500" d="m17 14.500 4 4" /></Glyph>
      </PhoneTitle>
      <PhoneBody>
        <PhoneList>
          {phoneRows.map(([icon, id, city], i) => (
            <React.Fragment key={id}>
              <PhoneRow $active={i === 1}>
                <span>{icon === "arrow" ? <ArrowGlyph /> : icon === "baidu" ? <BaiduGlyph /> : icon === "sogou" ? <SogouGlyph /> : null}</span>
                <strong>{id}</strong>
                <span>{city}</span>
                <GoGlyph open={i === 1} />
              </PhoneRow>
              {i === 1 && (
                <PhoneDetail>
                  <span>live 800</span><time>10:59 进入</time>
                  <DetailUrl href="#">http://www.baidu.com/s?wd...</DetailUrl><Talk>主动对话</Talk>
                </PhoneDetail>
              )}
            </React.Fragment>
          ))}
        </PhoneList>
      </PhoneBody>
      <PhoneTabs>
        <PhoneTab href="#"><Glyph w={22} h={22} box="0 -1 14 14"><path fillRule="evenodd" d={bubble} /></Glyph>对话</PhoneTab>
        <PhoneTab href="#" $active><Glyph w={21} h={21} box="0 0 12 12"><path d={person} /></Glyph>访客<Badge>1</Badge></PhoneTab>
        <PhoneTab href="#"><FaSearch size={21} />对话记录</PhoneTab>
        <PhoneTab href="#"><Glyph w={19} h={21}><path fill="none" stroke="currentColor" strokeWidth="1.700" d="M1 8.500 9.500 1.500 18 8.500V20H1z" /><path d="M1 9.500 7.500 14 1 20zM18 9.500 11.500 14 18 20zM2 20l7.500-7.500L17 20z" /></Glyph>留言<Badge>19</Badge></PhoneTab>
        <PhoneTab href="#"><FaCog size={21} />设置</PhoneTab>
      </PhoneTabs>
    </Screen>
    <HomeKey aria-label="主屏幕" />
  </Phone>
);

/* ---------- page ---------- */

export default function App() {
  return (
    <Desktop>
      <Global />
      <AppWindow
        top={19} left={21} right={291} viewIcon={<ColumnsIcon />}
        search={<SearchIconButton aria-label="搜索"><Search size={14} strokeWidth={2} /></SearchIconButton>}
      >
        <Panes>
          <ListPane>
            <VisitorGrid columns={narrowColumns} rows={narrowRows} nameColor="#4c4c4c" />
            <HScroll />
          </ListPane>
          <Conversation><ChatLog /></Conversation>
          <ReviewPane>
            <TabBar $start={7}>
              <Tab $tight>商品信息</Tab><Tab>客户信息</Tab><Tab>工单信息</Tab><Tab>订单信息</Tab><Tab $active>对话评估</Tab><Tab>轨迹</Tab>
            </TabBar>
            <ScrollRow>
              <ReviewForm id="back" size={10} start={0} gap={20} remark="备注的内的内容备注内容备注的内容备注的内容。" />
              <VThumb />
            </ScrollRow>
          </ReviewPane>
        </Panes>
      </AppWindow>

      <AppWindow
        top={189} left={292} right={19} viewIcon={<RowsIcon />}
        search={
          <SearchBox>
            <input aria-label="搜索访客" defaultValue="Cindy Linda 刘鑫 张明" />
            <IconButton aria-label="清除"><Glyph w={12} h={12}><circle cx="6" cy="6" r="6" fill="#cfcfcf" /><path stroke="#fff" strokeWidth="1.200" d="m3.700 3.700 4.600 4.600M8.300 3.700 3.700 8.300" /></Glyph></IconButton>
          </SearchBox>
        }
      >
        <TablePane>
          <TableClip><VisitorGrid columns={wideColumns} rows={wideRows} nameColor="#f7303f" /></TableClip>
          <VThumb $gap={7} />
        </TablePane>
        <HScroll><HThumb /></HScroll>
        <Panes>
          <Phrases>
            <PhraseTabs>
              <TabBar><Tab $active $accent>常用语</Tab><Tab>常用素材</Tab><Tab>知识推荐</Tab><Tab>知识库</Tab><Tab>常用</Tab></TabBar>
              <NextTabs aria-label="更多"><Triangle dir="right" size={6} /></NextTabs>
            </PhraseTabs>
            <PhraseSearch>
              <input aria-label="搜索常用语" placeholder="请输入搜索内容" />
              <Search size={14} strokeWidth={2} />
            </PhraseSearch>
            <Tree>
              <TreeHead>所有常用语</TreeHead>
              <TreeItem $depth={0}><Triangle dir="down" />公司FAQ</TreeItem>
              <TreeItem $depth={1}><Triangle dir="down" />4种知识点</TreeItem>
              <TreeItem $depth={2}><CommentIcon />全球通常用业务</TreeItem>
              <TreeItem $depth={2}><CommentIcon />优惠促销</TreeItem>
              <TreeItem $depth={0}><Triangle dir="right" />个人FAQ</TreeItem>
              <TreeItem $depth={0}><Triangle dir="right" />电子商务</TreeItem>
            </Tree>
          </Phrases>
          <Conversation><ChatLog /><Editor /></Conversation>
          <ReviewPane>
            <TabBar $start={2}>
              <Tab>商品信息</Tab><Tab>订单信息</Tab><Tab>客户信息</Tab><Tab>工单管理</Tab><Tab>轨迹</Tab><Tab $active>对话评估</Tab>
            </TabBar>
            <ReviewForm id="front" size={9} start={9} gap={14} remark="大客户要买定制版" />
          </ReviewPane>
        </Panes>
      </AppWindow>

      <PhoneApp />
    </Desktop>
  );
}
